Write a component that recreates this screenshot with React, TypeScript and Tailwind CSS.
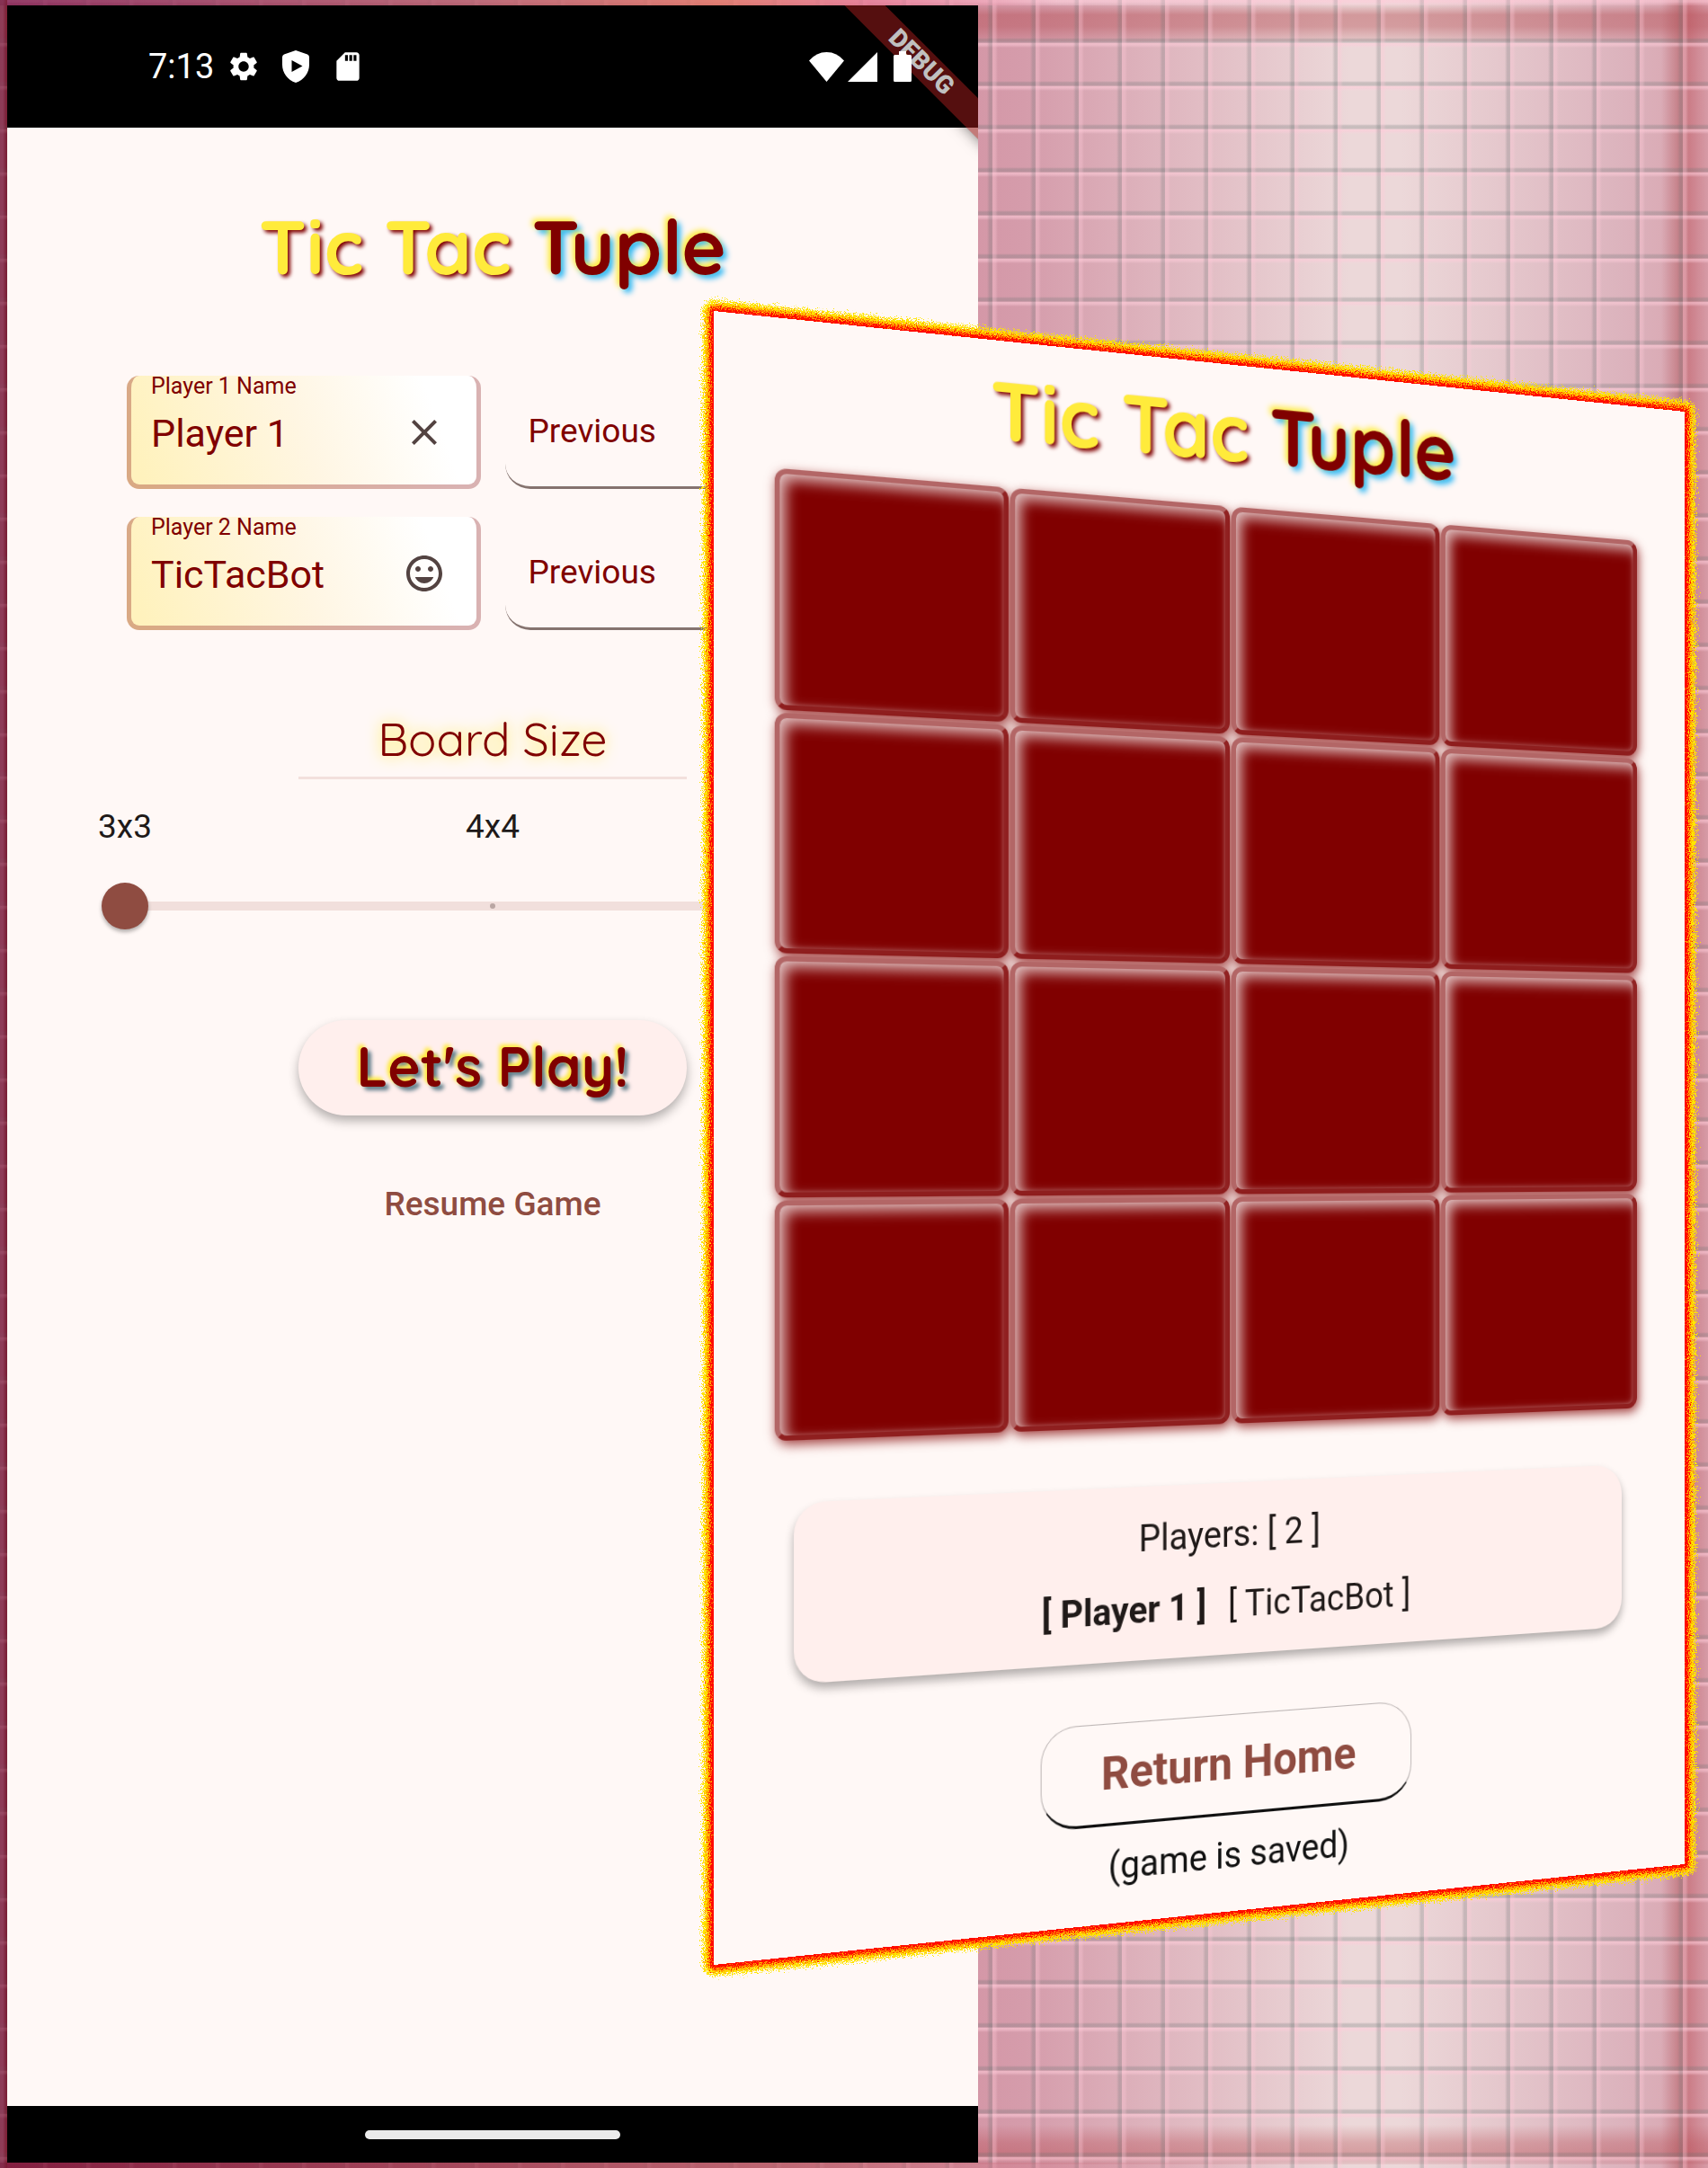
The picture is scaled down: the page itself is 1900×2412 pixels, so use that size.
import type { ReactNode } from "react";
import { MdClose, MdOutlineInsertEmoticon, MdSdCard, MdSettings } from "react-icons/md";

const titleYellow =
  "text-[#ffeb3b] [text-shadow:3px_3px_4px_#800000]";
const titleMaroon =
  "text-[#800000] [text-shadow:-3px_-3px_6px_#ffeb3b,4px_4px_6px_#29b6f6]";

function Title() {
  return (
    <h1 className="text-center font-['Quicksand','Lato',sans-serif] text-[84px] leading-[104px] font-bold whitespace-nowrap">
      <span className={titleYellow}>Tic Tac </span>
      <span className={titleMaroon}>Tuple</span>
    </h1>
  );
}

function ShieldIcon() {
  return (
    <svg viewBox="0 0 30 36" className="h-9 w-[30px]" aria-hidden="true">
      <path
        fill="#fff"
        fillRule="evenodd"
        d="M15 0 28 4.5Q30 5.500 30 7.500V16C30 25 24 33 15 36 6 33 0 25 0 16V7.500Q0 5.500 2 4.500ZM10.500 11V24L22.500 17.500Z"
      />
    </svg>
  );
}

function StatusBar() {
  return (
    <header className="flex h-[136px] items-center bg-black pr-[74px] pl-[157px] text-white">
      <span className="text-[38px] leading-none">7:13</span>
      <div className="ml-3.5 flex items-center gap-6">
        <MdSettings className="size-[38px]" />
        <ShieldIcon />
        <MdSdCard className="size-[38px]" />
      </div>
      <div className="relative z-10 ml-auto flex items-center gap-1">
        <svg viewBox="0 0 39 33" className="h-[33px] w-[39px]" aria-hidden="true">
          <path fill="#fff" d="M0 9.500Q8 0 19.500 0T39 9.500L19.500 33Z" />
        </svg>
        <svg viewBox="0 0 33 33" className="size-[33px]" aria-hidden="true">
          <path fill="#fff" d="M33 0V33H0Z" />
        </svg>
        <svg viewBox="0 0 20 34" className="ml-3.5 h-[34px] w-5" aria-hidden="true">
          <path fill="#fff" d="M6 0H14V4H18.500Q20 4 20 5.500V32.500Q20 34 18.500 34H1.500Q0 34 0 32.500V5.500Q0 4 1.500 4H6Z" />
        </svg>
      </div>
    </header>
  );
}

function DebugRibbon() {
  return (
    <div className="absolute top-0 right-0 size-[190px] overflow-hidden">
      <div className="absolute top-[47px] left-[7px] h-8 w-60 rotate-45 bg-[rgba(150,26,26,0.57)] text-center text-[28px] leading-8 font-black text-[#c0c0c0] shadow-[0_0_16px_rgba(0,0,0,0.5)]">
        DEBUG
      </div>
    </div>
  );
}

function PlayerRow({ id, label, value, icon }: { id: string; label: string; value: string; icon: ReactNode }) {
  return (
    <div className="grid h-[126px] grid-cols-2 gap-[27px]">
      <div className="flex items-center rounded-[14px] border-x-[5px] border-b-[5px] border-[rgba(128,0,0,0.3)] bg-[linear-gradient(70deg,#fff2bd_5%,#fff6e3_50%,#ffffff_85%)] bg-origin-border pr-[34px] pl-[22px]">
        <div className="flex h-full min-w-0 flex-1 flex-col">
          <label htmlFor={id} className="text-[25px] leading-6 text-[#800000]">
            {label}
          </label>
          <input
            id={id}
            defaultValue={value}
            className="mt-4 w-full bg-transparent text-[43px] leading-[48px] text-[#800000] outline-none"
          />
        </div>
        <button type="button" aria-label={`${label} options`} className="pt-1 text-[#534341]">
          {icon}
        </button>
      </div>
      <select
        aria-label={`${label} history`}
        className="appearance-none rounded-b-[28px] border-b-[3px] border-[#85736f] bg-transparent pl-[26px] text-[37px] text-[#800000] outline-none"
      >
        <option>Previous</option>
      </select>
    </div>
  );
}

function BoardSize() {
  return (
    <section className="mt-[82px]">
      <h2 className="mx-auto w-[432px] border-b-[3px] border-[#f3e0dd] pb-1 text-center font-['Quicksand','Lato',sans-serif] text-[52px] leading-[77px] font-normal text-[#800000] [text-shadow:0_0_16px_#ffeb3b]">
        Board Size
      </h2>
      <div className="mt-[31px] flex justify-between px-[101px] text-[37px] leading-11 text-[#201a19]">
        <span>3x3</span>
        <span>4x4</span>
        <span>5x5</span>
      </div>
      <div className="relative mt-10 flex justify-center px-[105px]">
        <input
          type="range"
          aria-label="Board size"
          min={3}
          max={5}
          step={1}
          defaultValue={3}
          className="h-[52px] w-full appearance-none bg-transparent [&::-webkit-slider-runnable-track]:h-2.5 [&::-webkit-slider-runnable-track]:bg-[linear-gradient(90deg,transparent_20px,#f1dfdc_20px)] [&::-webkit-slider-thumb]:-mt-[21px] [&::-webkit-slider-thumb]:size-[52px] [&::-webkit-slider-thumb]:appearance-none [&::-webkit-slider-thumb]:rounded-full [&::-webkit-slider-thumb]:bg-[#8f4c41] [&::-webkit-slider-thumb]:shadow-[0_3px_4px_rgba(0,0,0,0.3)]"
        />
        <span className="pointer-events-none absolute top-[23px] left-1/2 size-1.5 -translate-x-1/2 rounded-full bg-[#b9a6a3]" />
      </div>
    </section>
  );
}

function HomeScreen() {
  return (
    <section className="relative z-0 col-span-2 col-start-2 row-start-1 my-1.5 flex flex-col overflow-hidden bg-[#fff8f6]">
      <StatusBar />
      <DebugRibbon />
      <div className="flex-1 pt-20">
        <Title />
        <div className="mt-[92px] flex flex-col gap-[31px] px-[133px]">
          <PlayerRow id="p1" label="Player 1 Name" value="Player 1" icon={<MdClose className="size-12" />} />
          <PlayerRow id="p2" label="Player 2 Name" value="TicTacBot" icon={<MdOutlineInsertEmoticon className="size-12" />} />
        </div>
        <BoardSize />
        <div className="mt-[101px] flex flex-col items-center">
          <button
            type="button"
            className="h-[106px] w-[432px] rounded-full bg-[#ffefed] pb-1 font-['Quicksand','Lato',sans-serif] text-[62px] leading-none font-bold text-[#800000] shadow-[0_6px_12px_rgba(0,0,0,0.3)] [text-shadow:-3px_-3px_4px_#ffeb3b,4px_4px_4px_#607d8b]"
          >
            Let&apos;s Play!
          </button>
          <button type="button" className="mt-[77px] text-[37px] leading-11 font-medium text-[#8f4c41]">
            Resume Game
          </button>
        </div>
      </div>
      <footer className="flex h-[63px] items-center justify-center bg-black">
        <div className="h-2.5 w-[284px] rounded-full bg-[#ebebeb]" />
      </footer>
    </section>
  );
}

function FlameEdge() {
  const corners = "0,0 1080,112 1080,1728 0,1840";
  return (
    <svg
      viewBox="0 0 1080 1840"
      preserveAspectRatio="none"
      className="pointer-events-none absolute inset-x-0 -top-[108px] h-[1840px] w-full overflow-visible"
      aria-hidden="true"
    >
      <filter id="flame" filterUnits="userSpaceOnUse" x="-40" y="-40" width="1160" height="1920" colorInterpolationFilters="sRGB">
        <feTurbulence type="fractalNoise" baseFrequency="0.83" numOctaves="2" seed="4" result="noise" />
        <feDisplacementMap in="SourceGraphic" in2="noise" scale="18" xChannelSelector="R" yChannelSelector="G" />
      </filter>
      <g filter="url(#flame)" strokeLinejoin="round" fill="none">
        <polygon points={corners} stroke="#ffe600" strokeWidth="24" />
        <polygon points={corners} stroke="#ffb300" strokeWidth="16" />
        <polygon points={corners} stroke="#ff7a00" strokeWidth="12" />
        <polygon points={corners} stroke="#ff0a00" strokeWidth="8" />
      </g>
    </svg>
  );
}

function Board() {
  return (
    <div className="mx-[60px] mt-[27px] grid grid-cols-4 gap-x-0.5 gap-y-[3px]">
      {Array.from({ length: 16 }, (_, i) => (
        <button
          key={i}
          type="button"
          aria-label={`Square ${i + 1}`}
          className="aspect-square rounded-xl border-[5px] border-t-[rgba(255,255,255,0.4)] border-r-[rgba(255,255,255,0.14)] border-b-[rgba(255,255,255,0.12)] border-l-[rgba(255,255,255,0.4)] bg-[#800000] shadow-[2px_4px_12px_rgba(128,0,0,0.75),inset_6px_6px_14px_rgba(255,255,255,0.7),inset_0_0_5px_rgba(255,255,255,0.25)]"
        />
      ))}
    </div>
  );
}

function GameScreen() {
  return (
    <div className="relative z-10 col-span-2 col-start-3 row-start-1 mt-[454px] self-start">
      <FlameEdge />
      <section className="relative flex origin-left flex-col bg-[#fff8f6] pt-[18px] pb-[37px] [transform:matrix3d(1.1386,0,0,0.00012833,0,1.133,0,0,0,0,1,0,0,0,0,1)]">
        <Title />
        <Board />
        <div className="mx-[79px] mt-[62px] flex flex-col items-center gap-[30px] rounded-[32px] bg-[#ffefed] pt-8 pb-[30px] text-[38px] leading-11 text-[#201a19] shadow-[0_6px_10px_rgba(0,0,0,0.3)]">
          <p>Players: [ 2 ]</p>
          <p className="flex gap-6 whitespace-nowrap">
            <strong className="font-bold">[ Player 1 ]</strong>
            <span>[ TicTacBot ]</span>
          </p>
        </div>
        <button
          type="button"
          className="mx-auto mt-[63px] h-[106px] w-[414px] rounded-[38px] border border-b-[3px] border-[#bdb6b5] border-b-[#111] text-[48px] leading-none font-bold text-[#8f4c41]"
        >
          Return Home
        </button>
        <p className="mt-5 text-center text-[38px] leading-11 text-[#111]">(game is saved)</p>
      </section>
    </div>
  );
}

function Wallpaper() {
  return (
    <div className="relative col-span-full row-start-1 bg-[linear-gradient(90deg,#82314c_0%,#b06272_28%,#d38fa0_52%,#d59cab_60%,#ecd8d9_79%,#ecd8d9_82%,#dcb3bd_95%,#d9a3ae_100%)]">
      <div className="absolute inset-x-0 top-1 h-[42px] bg-[linear-gradient(180deg,transparent,rgba(175,65,70,0.42)_30%,rgba(175,65,70,0.4)_60%,rgba(175,65,70,0.1))]" />
      <div className="absolute inset-x-0 bottom-1 h-11 bg-[linear-gradient(180deg,transparent,rgba(175,60,65,0.3)_45%,rgba(175,60,65,0.38)_75%,rgba(175,65,70,0.1))]" />
      <div className="absolute inset-y-0 right-0 w-[52px] bg-[linear-gradient(90deg,transparent,rgba(170,75,80,0.4)_35%,rgba(185,75,85,0.45)_60%,rgba(200,110,125,0.15))]" />
      <div className="absolute inset-0 bg-[linear-gradient(90deg,rgba(255,200,215,0.35)_0,rgba(255,200,215,0.35)_3px,transparent_6px,transparent_42px,rgba(105,115,115,0.27)_45px,rgba(105,115,115,0.24)_48px),linear-gradient(180deg,rgba(255,205,218,0.55)_0,rgba(255,205,218,0.5)_2px,transparent_5px,transparent_42px,rgba(105,115,115,0.27)_44px,rgba(105,115,115,0.27)_47px,rgba(255,205,218,0.3)_48px)] bg-size-[48px_48px]" />
      <div className="absolute inset-x-0 top-0 h-1.5 bg-[linear-gradient(90deg,rgba(140,48,96,0.85)_0%,rgba(184,100,114,0.85)_28%,rgba(224,120,105,0.85)_42%,rgba(229,122,149,0.8)_51%,rgba(255,215,225,0.3)_62%,rgba(255,190,205,0.2)_100%)]" />
      <div className="absolute inset-x-0 bottom-0 h-1.5 bg-[linear-gradient(90deg,rgba(130,25,60,0.8)_0%,rgba(185,95,105,0.8)_45%,rgba(205,110,125,0.4)_58%,transparent_75%)]" />
      <div className="absolute inset-y-0 left-0 w-2 bg-[linear-gradient(90deg,rgba(130,45,75,0.75)_40%,rgba(120,25,45,0.75))]" />
    </div>
  );
}

export default function App() {
  return (
    <main className="grid min-h-screen grid-cols-[8fr_786fr_294fr_786fr_26fr] overflow-hidden font-['Roboto',sans-serif]">
      <Wallpaper />
      <HomeScreen />
      <GameScreen />
    </main>
  );
}
